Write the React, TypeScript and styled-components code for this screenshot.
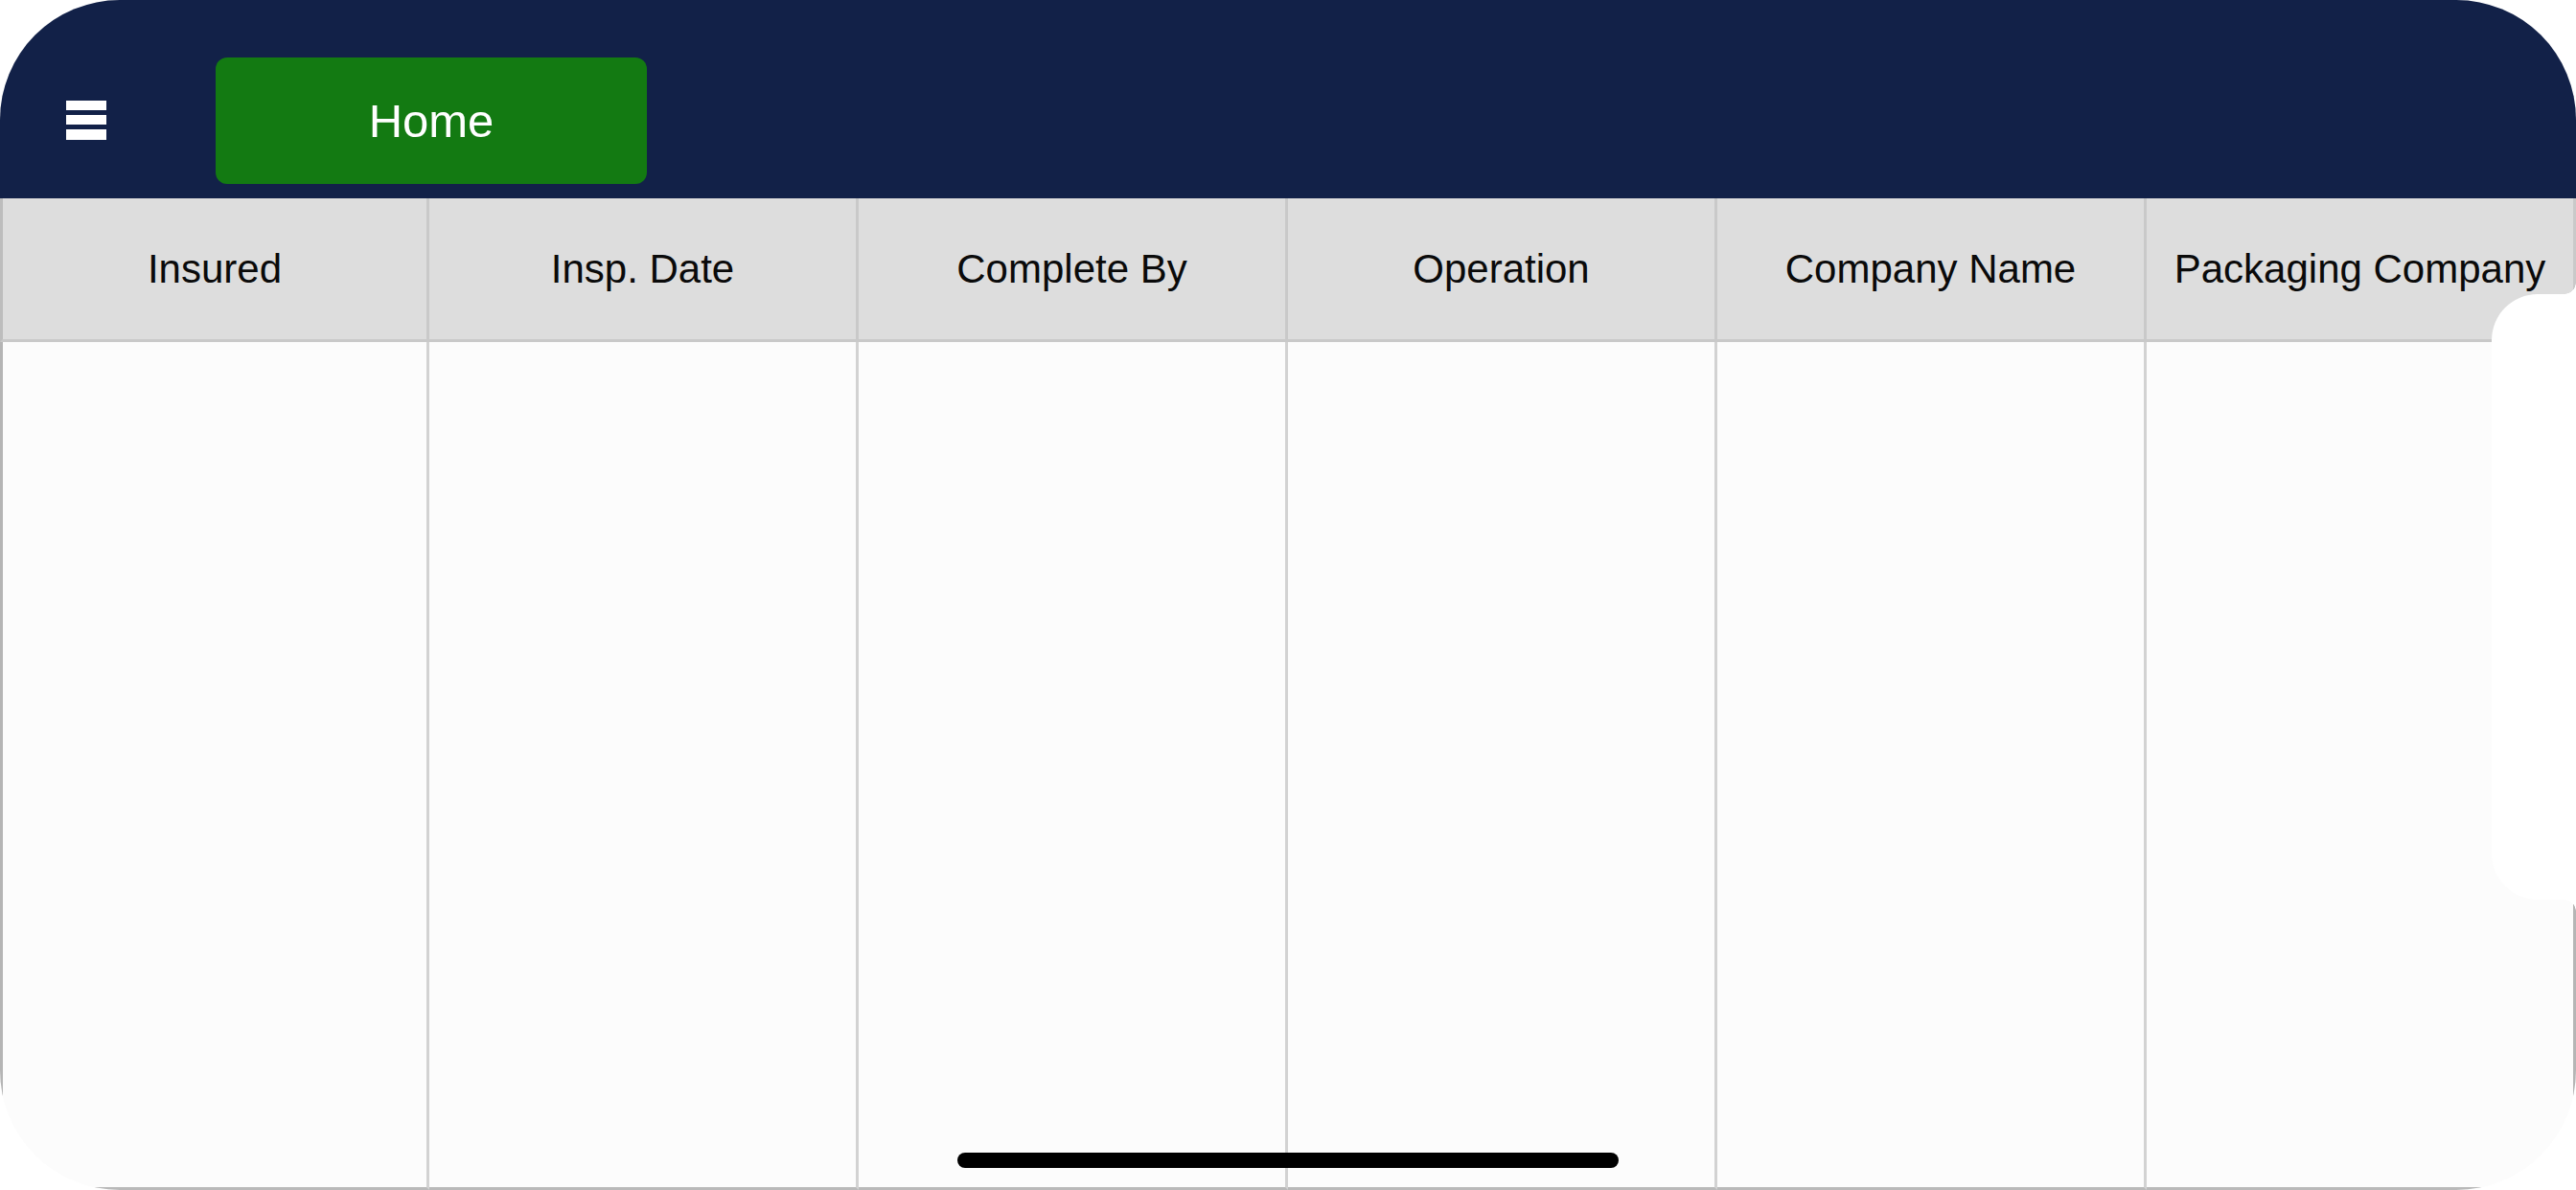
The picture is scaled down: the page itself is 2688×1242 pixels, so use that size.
import React from "react";
import styled, { createGlobalStyle } from "styled-components";

const GlobalStyle = createGlobalStyle`
  html, body {
    margin: 0;
    padding: 0;
    background: #ffffff;
    width: 100%;
    height: 100%;
    overflow: hidden;
  }
  #root {
    width: 100vw;
    height: 100vh;
  }
  * {
    box-sizing: border-box;
  }
`;

const Screen = styled.div`
  position: relative;
  width: 100vw;
  height: 100vh;
  border-radius: 125px;
  overflow: hidden;
  background: #fcfcfc;
  display: flex;
  flex-direction: column;
  font-family: "Liberation Sans", Arial, sans-serif;
`;

const TopBar = styled.header`
  flex: 0 0 auto;
  height: 207px;
  background: #122148;
  display: flex;
  align-items: center;
  padding: 60px 0 15px 69px;
  gap: 114px;
`;

const MenuButton = styled.button`
  width: 42px;
  height: 42px;
  padding: 0;
  border: none;
  background: transparent;
  display: flex;
  align-items: center;
  justify-content: center;
  cursor: pointer;
`;

const HomeButton = styled.button`
  width: 450px;
  height: 132px;
  border: none;
  border-radius: 12px;
  background: #137a12;
  color: #ffffff;
  font-family: "Liberation Sans", Arial, sans-serif;
  font-size: 49px;
  font-weight: 400;
  display: flex;
  align-items: center;
  justify-content: center;
  padding: 0;
  cursor: pointer;
`;

const Table = styled.div`
  flex: 1 1 auto;
  display: grid;
  grid-template-columns: repeat(6, 1fr);
  grid-template-rows: 150px 1fr;
`;

const HeaderCell = styled.div`
  background: #dddddd;
  border-right: 3px solid #c9c9c9;
  border-bottom: 3px solid #c9c9c9;
  display: flex;
  align-items: center;
  justify-content: center;
  font-size: 42px;
  color: #0a0a0a;
  white-space: nowrap;
  &:first-child {
    border-left: 3px solid #bdbdbd;
  }
`;

const BodyCell = styled.div<{ $first?: boolean }>`
  background: #fcfcfc;
  border-right: 3px solid #d2d2d2;
  border-bottom: 3px solid #b9b9b9;
  border-left: ${(p) => (p.$first ? "3px solid #b5b5b5" : "none")};
  &:last-child {
    border-right-color: #b5b5b5;
  }
`;

const Notch = styled.div`
  position: absolute;
  right: 0;
  top: 307px;
  width: 88px;
  height: 632px;
  background: #ffffff;
  border-radius: 48px 0 0 48px;

  &::before,
  &::after {
    content: "";
    position: absolute;
    right: 0;
    width: 12px;
    height: 12px;
  }
  &::before {
    top: -12px;
    background: radial-gradient(circle at 0 0, transparent 11.5px, #ffffff 12px);
  }
  &::after {
    bottom: -12px;
    background: radial-gradient(circle at 0 100%, transparent 11.5px, #ffffff 12px);
  }
`;

const HomeIndicator = styled.div`
  position: absolute;
  bottom: 23px;
  left: 50%;
  transform: translateX(-50%);
  width: 690px;
  height: 16px;
  border-radius: 8px;
  background: #000000;
`;

const columns = [
  "Insured",
  "Insp. Date",
  "Complete By",
  "Operation",
  "Company Name",
  "Packaging Company",
];

const MenuIcon = () => (
  <svg width="42" height="42" viewBox="0 0 42 42">
    <rect x="0" y="0" width="42" height="10" fill="#ffffff" />
    <rect x="0" y="15" width="42" height="10" fill="#ffffff" />
    <rect x="0" y="30" width="42" height="11" fill="#ffffff" />
  </svg>
);

export default function App() {
  return (
    <>
      <GlobalStyle />
      <Screen>
        <TopBar>
          <MenuButton aria-label="Menu">
            <MenuIcon />
          </MenuButton>
          <HomeButton>Home</HomeButton>
        </TopBar>
        <Table>
          {columns.map((c) => (
            <HeaderCell key={c}>{c}</HeaderCell>
          ))}
          {columns.map((c, i) => (
            <BodyCell key={c + "-body"} $first={i === 0} />
          ))}
        </Table>
        <Notch />
        <HomeIndicator />
      </Screen>
    </>
  );
}
